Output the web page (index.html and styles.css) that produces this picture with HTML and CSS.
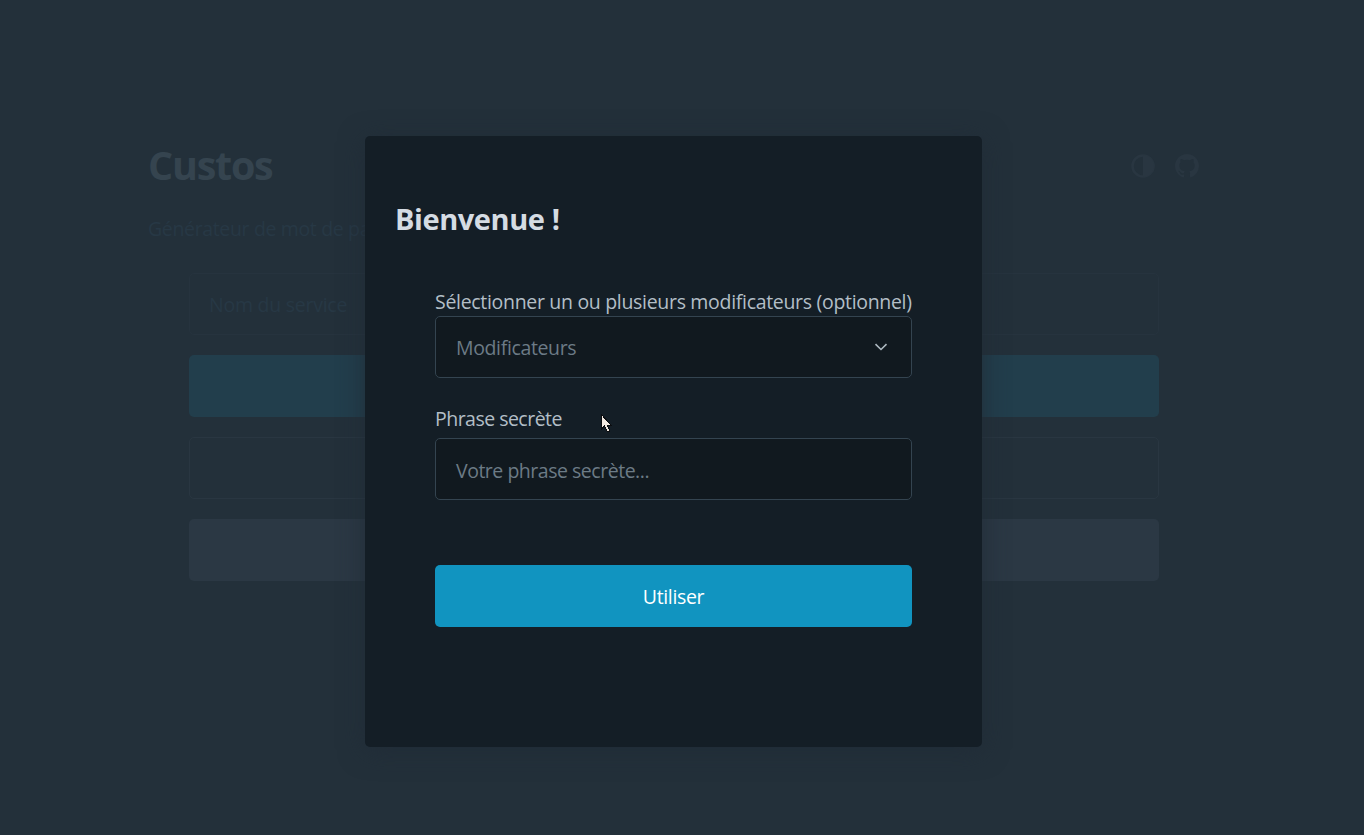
FILE: index.html
```html
<!DOCTYPE html>
<html lang="fr">
<head>
<meta charset="utf-8">
<title>Custos</title>
<link rel="stylesheet" href="styles.css">
</head>
<body>
<main class="page" inert>
  <header class="header">
    <h1 class="brand"><span>Custos</span></h1>
    <nav class="links">
      <svg class="icon" viewBox="0 0 24 24"><circle cx="12" cy="12" r="10.500" fill="none" stroke="currentColor" stroke-width="2.600"/><path fill="currentColor" d="M12 1a11 11 0 0 1 0 22z"/></svg>
      <svg class="icon" viewBox="0 0 16 16"><path fill="currentColor" d="M8 0C3.580 0 0 3.580 0 8c0 3.540 2.290 6.530 5.470 7.590.4.07.55-.17.55-.38 0-.19-.01-.82-.01-1.490-2.010.37-2.530-.49-2.690-.94-.09-.23-.48-.94-.82-1.130-.28-.15-.68-.52-.01-.53.63-.01 1.080.58 1.230.82.72 1.210 1.870.87 2.330.66.07-.52.28-.87.51-1.070-1.780-.2-3.640-.89-3.640-3.950 0-.87.31-1.590.82-2.150-.08-.2-.36-1.020.08-2.120 0 0 .67-.21 2.200.82a7.600 7.600 0 0 1 4 0c1.530-1.040 2.200-.82 2.200-.82.44 1.100.16 1.920.08 2.120.51.56.82 1.270.82 2.150 0 3.070-1.870 3.750-3.650 3.950.29.25.54.73.54 1.480 0 1.070-.01 1.930-.01 2.200 0 .21.15.46.55.38A8.010 8.010 0 0 0 16 8c0-4.420-3.580-8-8-8z"/></svg>
    </nav>
  </header>
  <p class="tagline"><span>Générateur de mot de pa</span></p>
  <div class="rows">
    <div class="row row-input"><span>Nom du service</span></div>
    <div class="row row-primary"></div>
    <div class="row row-outline"></div>
    <div class="row row-secondary"></div>
  </div>
</main>
<div class="overlay">
  <section class="dialog" role="dialog">
    <h2 class="title"><span>Bienvenue !</span></h2>
    <form class="form">
      <div class="label label-mods"><span>Sélectionner un ou plusieurs modificateurs (optionnel)</span></div>
      <div class="field select"><span class="mods">Modificateurs</span>
        <svg class="chevron" viewBox="0 0 14 8"><path d="M1.500 1.200 7 6.500l5.500-5.300" fill="none" stroke="currentColor" stroke-width="1.600"/></svg>
      </div>
      <div class="label label-secret"><span>Phrase secrète</span></div>
      <div class="field field-secret"><span>Votre phrase secrète...</span></div>
      <button class="submit" type="button"><span>Utiliser</span></button>
    </form>
  </section>
</div>
<svg class="cursor" viewBox="0 0 12 19" shape-rendering="crispEdges"><path d="M.5.5v14.500l3.200-3 2.600 6 2.500-1-2.600-5.500h4z" fill="#f3eae2" stroke="#0b0d10"/></svg>
</body>
</html>
```
FILE: styles.css
```css
* { box-sizing: border-box; }
html, body { height: 100%; }
body {
  margin: 0;
  overflow: hidden;
  background: #23303a;
  font-family: "Open Sans", "Noto Sans", sans-serif;
  font-size: 19.5px;
  line-height: 30px;
  letter-spacing: -.31px;
}
h1, h2, p { margin: 0; }
.page { width: 1051px; margin-left: 148px; padding-top: 135px; }
.header { display: flex; justify-content: space-between; align-items: center; height: 60px; }
.brand { color: #35444f; font-size: 39.5px; line-height: 60px; font-weight: 700; letter-spacing: -1.25px; }
.links { display: flex; gap: 20px; padding-top: 2px; color: #293641; }
.icon { width: 24px; height: 24px; }
.tagline { margin-top: 19px; color: #273845; letter-spacing: -.35px; }
.rows { display: grid; gap: 20px; padding: 29px 40px 0 41px; }
.row { height: 62px; border-radius: 5px; }
.row-input { padding: 16px 19px; border: 1px solid #26333e; color: #273845; letter-spacing: -.25px; }
.row-primary { background: #223e4c; }
.row-outline { border: 1px solid #293641; }
.row-secondary { background: #2b3844; }
.overlay {
  position: absolute;
  inset: 0;
  padding: 136px 0 0 365px;
}
.dialog {
  width: 617px;
  height: 611px;
  padding: 62px 70px 0;
  border-radius: 5px;
  background: #141e26;
  box-shadow: 0 4px 26px rgba(32, 43, 54, .9);
}
.title { margin-left: -40px; font-size: 29px; line-height: 42px; font-weight: 700; letter-spacing: -.43px; color: #d5dce3; }
.form { display: flex; flex-direction: column; padding-top: 46px; }
.label { height: 30px; padding-top: 1px; color: #b3bec7; white-space: nowrap; }
.label-secret { margin: 26px 0 4px; padding-top: 0; letter-spacing: -.52px; }
.field {
  display: flex;
  align-items: center;
  justify-content: space-between;
  height: 62px;
  padding: 2px 23px 0 20px;
  border: 1px solid #344450;
  border-radius: 5px;
  background: #11191f;
  color: #6c7b86;
}
.mods { letter-spacing: -.36px; }
.field-secret { padding-top: 4px; letter-spacing: -.48px; }
.chevron { width: 14px; height: 8px; margin-top: -2px; color: #adb8c0; }
.submit {
  height: 62px;
  margin-top: 65px;
  padding: 2px 0 0;
  border: 0;
  border-radius: 5px;
  background: #1194c0;
  color: #fff;
  font: inherit;
  letter-spacing: -.35px;
}
.cursor { position: absolute; left: 601px; top: 414px; width: 12px; height: 19px; }
```
